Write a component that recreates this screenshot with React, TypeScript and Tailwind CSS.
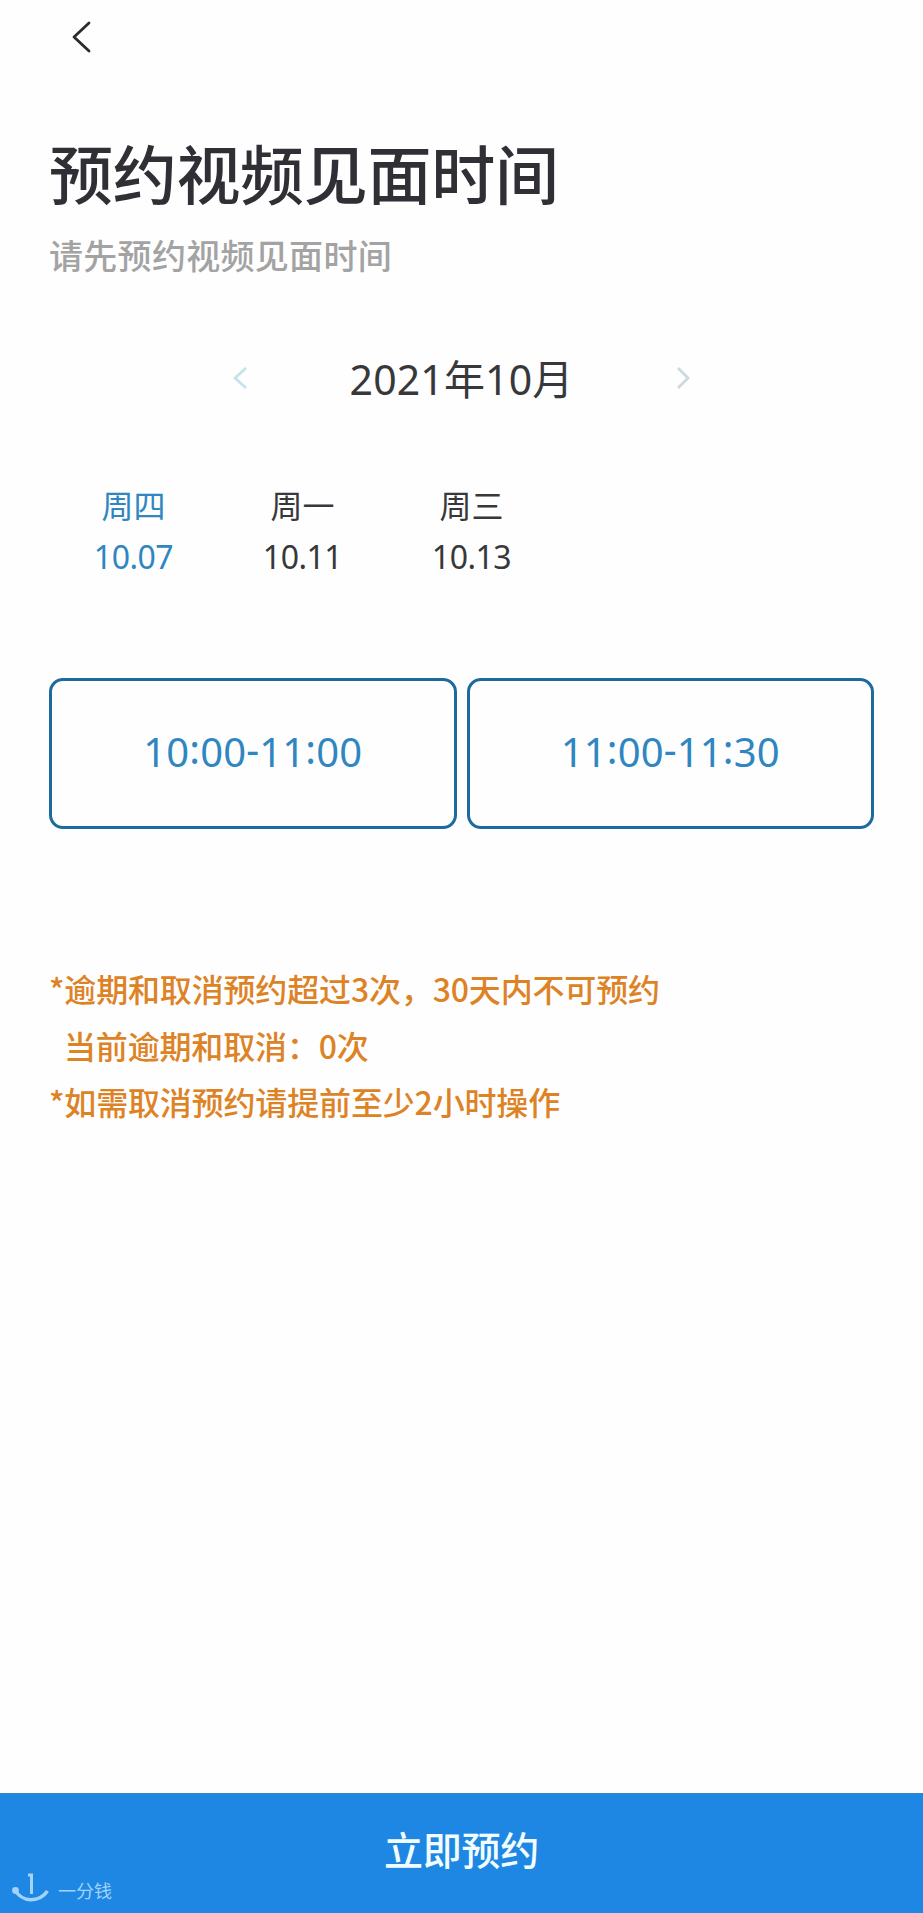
import React from 'react';

const days = [
  { week: '周四', date: '10.07' },
  { week: '周一', date: '10.11' },
  { week: '周三', date: '10.13' },
];

const slots = ['10:00-11:00', '11:00-11:30'];

const App: React.FC = () => {
  const dayStyle = "flex flex-col items-center w-[169px] text-[32px] leading-10 gap-[11px]";
  const slotStyle = "flex-1 h-[151px] pb-[3px] flex items-center justify-center rounded-[14px] border-[3px] border-[#1d6a9c] text-[40px] tracking-[0.15px] text-[#2f86c1]";
  return (
    <div className="w-full h-[1913px] flex flex-col bg-[#fefefe] font-['Noto_Sans','Noto_Sans_CJK_SC',sans-serif] text-[#38383b]">
      <header className="h-[74px] pl-[72px] pt-[21px]">
        <svg width="20" height="32" viewBox="0 0 20 32" fill="none" stroke="#2b2b2e" strokeWidth="2.8" strokeLinecap="round" strokeLinejoin="round">
          <path d="M17 2L2 16L17 30" />
        </svg>
      </header>

      <main className="flex-1 flex flex-col px-[49px] pt-[69px]">
        <h1 className="text-[64px] leading-[64px] font-medium tracking-[-0.3px] text-[#2f2f35]">预约视频见面时间</h1>
        <p className="mt-[29px] text-[34px] leading-10 font-medium tracking-[0.3px] text-[#a3a3a3]">请先预约视频见面时间</p>

        <div className="mt-[78px] h-12 flex items-center justify-between pl-[184px] pr-[184px]">
          <svg width="14" height="22" viewBox="0 0 14 22" fill="none" stroke="#c6e2ea" strokeWidth="2.8">
            <path d="M13 1L2 11L13 21" />
          </svg>
          <span className="pt-[2px] text-[41px] leading-[48px] tracking-[0.15px]">2021年10月</span>
          <svg width="14" height="22" viewBox="0 0 14 22" fill="none" stroke="#ccdadd" strokeWidth="2.8">
            <path d="M2 1L12 11L2 21" />
          </svg>
        </div>

        <div className="mt-[84px] flex">
          {days.map((day, index) => (
            <div key={day.date} className={`${dayStyle} ${index === 0 ? 'text-[#2f86c1]' : ''}`}>
              <span>{day.week}</span>
              <span className="tracking-[-0.5px]">{day.date}</span>
            </div>
          ))}
        </div>

        <div className="mt-[101px] flex gap-[10px]">
          {slots.map((slot) => (
            <button key={slot} className={slotStyle}>
              <span>
                {/* colon and dash sit at mid height of the digits */}
                {slot.split(/([:-])/).map((part, i) => (
                  <span key={i} className={i % 2 === 1 ? 'relative -top-[3px]' : ''}>{part}</span>
                ))}
              </span>
            </button>
          ))}
        </div>

        <div className="mt-[131px] text-[32px] leading-[56.5px] font-medium tracking-[-0.16px] text-[#dd8326] font-['Noto_Sans_CJK_SC',sans-serif]">
          <p>*逾期和取消预约超过3次，30天内不可预约</p>
          <p className="pl-[15px]">当前逾期和取消：0次</p>
          <p>*如需取消预约请提前至少2小时操作</p>
        </div>
      </main>

      <footer className="relative h-[120px] pb-[7px] flex items-center justify-center bg-[#1e87e3] border-t border-[#3f83b8]">
        <span className="text-[39px] leading-[48px] font-medium tracking-[-0.2px] text-[#f2fdff]">立即预约</span>
        <div className="absolute left-3 bottom-[10px] flex items-end gap-[9px] text-[#a3d3fa]">
          <svg width="37" height="30" viewBox="0 0 37 30" fill="none" stroke="currentColor">
            <path d="M16 2H19.5V21" strokeWidth="3" />
            <path d="M3 17C10 29.5 27 30 35.5 18" strokeWidth="3.4" />
            <circle cx="3.5" cy="17.5" r="3.4" fill="currentColor" stroke="none" />
          </svg>
          <span className="text-[18px] leading-6">一分钱</span>
        </div>
      </footer>
    </div>
  );
};

export default App;
